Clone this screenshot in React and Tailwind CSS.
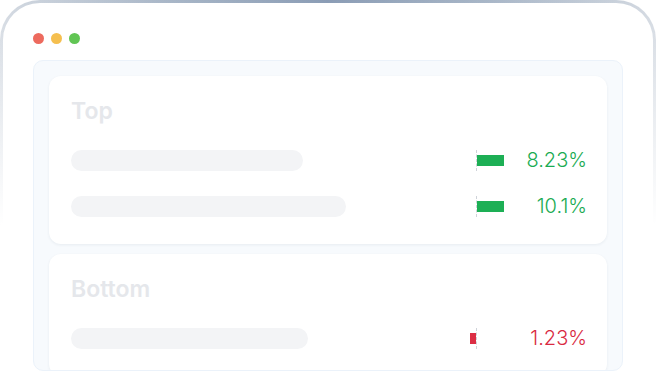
import React from "react";

const Row = ({ barW, value, pct, positive }) => (
  <div className="flex h-[32px] items-center">
    <div className="h-[21px] rounded-full bg-[#f3f4f6]" style={{ width: barW }} />
    <div className="flex-1" />
    <div className="flex h-[21px] w-[57px] items-center">
      <div className="flex h-full w-[28px] items-center justify-end">
        {!positive && <div className="h-[11px] bg-[#dc2f45]" style={{ width: value }} />}
      </div>
      <div className="h-[21px] w-0 border-l border-dashed border-[#cfd3d9]" />
      <div className="flex h-full w-[28px] items-center justify-start">
        {positive && <div className="h-[11px] bg-[#1daf55]" style={{ width: value }} />}
      </div>
    </div>
    <div
      className={
        "mr-[-2px] ml-[8px] w-[74px] text-right text-[20px] leading-[24px] font-light " +
        (positive ? "text-[#1aab52]" : "text-[#d92a42]")
      }
    >
      {pct}
    </div>
  </div>
);

const Card = ({ title, children }) => (
  <div className="shrink-0 rounded-[12px] bg-white px-[22px] pt-[21px] pb-[22px] shadow-[0_1px_3px_rgba(30,50,80,0.07)]">
    <div className="h-[28px] text-[23px] leading-[28px] font-semibold text-[#e5e7eb]">{title}</div>
    <div className="mt-[19px] flex flex-col gap-[14px]">{children}</div>
  </div>
);

export default function App() {
  return (
    <div
      className="h-[372px] w-[656px] overflow-hidden bg-white"
      style={{ fontFamily: "Inter, 'Noto Sans', sans-serif" }}
    >
      <div className="h-[380px] w-[656px] rounded-t-[40px] bg-[linear-gradient(to_bottom,rgba(255,255,255,0)_0px,rgba(255,255,255,0.55)_120px,#ffffff_225px),linear-gradient(to_right,#d3d9e1_0%,#a9b7c8_25%,#8a9cb5_50%,#a9b7c8_75%,#d3d9e1_100%)] px-[3px] pt-[3px]">
        <div className="flex h-full flex-col rounded-t-[37px] bg-white px-[30px] pt-[30px]">
          <div className="flex gap-[7px]">
            <div className="h-[11px] w-[11px] rounded-full bg-[#ed6a5e]" />
            <div className="h-[11px] w-[11px] rounded-full bg-[#f5bf4f]" />
            <div className="h-[11px] w-[11px] rounded-full bg-[#61c554]" />
          </div>
          <div className="mt-[16px] flex h-[311px] flex-col gap-[10px] overflow-hidden rounded-[10px] border border-[#ebf2fa] bg-[#f7fafd] p-[15px]">
            <Card title="Top">
              <Row barW={232} value={27} pct="8.23%" positive />
              <Row barW={275} value={27} pct="10.1%" positive />
            </Card>
            <Card title="Bottom">
              <Row barW={237} value={6} pct="1.23%" positive={false} />
            </Card>
          </div>
        </div>
      </div>
    </div>
  );
}
